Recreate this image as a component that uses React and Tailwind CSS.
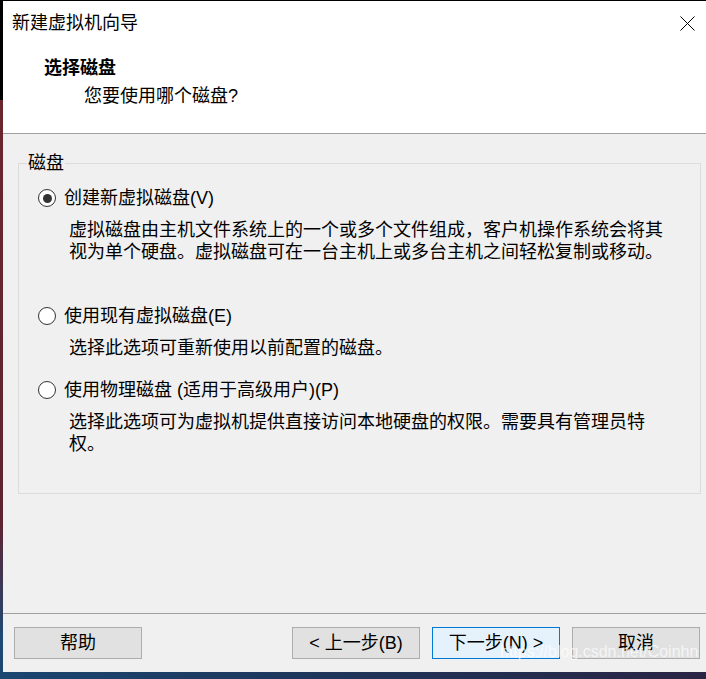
import React from "react";

const FONT = "font-['Liberation_Sans','Noto_Sans_CJK_SC',sans-serif]";

function Radio({ checked }) {
  return (
    <span className="flex h-[18px] w-[18px] flex-none items-center justify-center rounded-full border border-[#333333] bg-white">
      {checked && <span className="h-[9px] w-[9px] rounded-full bg-[#333333]" />}
    </span>
  );
}

function Option({ checked, label, lines, gapTop }) {
  return (
    <div className={gapTop}>
      <div className="flex h-[22px] items-center gap-[8px]">
        <Radio checked={checked} />
        <span className="leading-[22px]">{label}</span>
      </div>
      <div className="mt-[10px] pl-[31px] leading-[22px]">
        {lines.map((l) => (
          <div key={l} className="whitespace-nowrap">
            {l}
          </div>
        ))}
      </div>
    </div>
  );
}

function Button({ children, primary }) {
  return (
    <button
      className={
        primary
          ? "h-[32px] w-[128px] border border-[#0078d7] bg-[#e5f1fb] leading-[22px]"
          : "h-[32px] w-[128px] border border-[#adadad] bg-[#e1e1e1] leading-[22px]"
      }
    >
      {children}
    </button>
  );
}

export default function App() {
  return (
    <div className={`relative flex h-[679px] w-[706px] flex-col overflow-hidden bg-black text-[18px] text-black ${FONT}`}>
      {/* top edge of desktop */}
      <div className="h-[1px] flex-none bg-black" />

      <div className="flex flex-none">
        {/* desktop strip visible to the left */}
        <div className="w-[3px] flex-none bg-[linear-gradient(to_bottom,#000_0px,#000_99px,#6b262d_99px,#5e2330_520px,#1d4a75_640px,#1b4670_671px)]" />

        {/* wizard window */}
        <div className="flex h-[671px] flex-1 flex-col bg-[#f0f0f0]">
          {/* title bar */}
          <div className="flex h-[44px] flex-none items-center bg-white pl-[9px] pr-[11px]">
            <span className="leading-[22px]">新建虚拟机向导</span>
            <svg className="ml-auto" width="15" height="15" viewBox="0 0 15 15">
              <path d="M0.5 0.5 L14.5 14.5 M14.5 0.5 L0.5 14.5" stroke="#000" strokeWidth="1" fill="none" />
            </svg>
          </div>

          {/* header */}
          <div className="h-[89px] flex-none border-b border-[#a0a0a0] bg-white pt-[12px]">
            <div className="pl-[41px] font-bold leading-[22px]">选择磁盘</div>
            <div className="mt-[6px] pl-[81px] leading-[22px]">您要使用哪个磁盘?</div>
          </div>

          {/* body */}
          <div className="flex-1 pt-[18px]">
            <fieldset className="ml-[15px] mr-[5px] border border-[#dcdcdc] pb-[38px] pl-[19px] pt-[13px]">
              <legend className="ml-[-11px] px-[1px] leading-[22px]">磁盘</legend>
              <Option
                checked
                label="创建新虚拟磁盘(V)"
                lines={[
                  "虚拟磁盘由主机文件系统上的一个或多个文件组成，客户机操作系统会将其",
                  "视为单个硬盘。虚拟磁盘可在一台主机上或多台主机之间轻松复制或移动。",
                ]}
              />
              <Option
                label="使用现有虚拟磁盘(E)"
                lines={["选择此选项可重新使用以前配置的磁盘。"]}
                gapTop="mt-[42px]"
              />
              <Option
                label="使用物理磁盘 (适用于高级用户)(P)"
                lines={[
                  "选择此选项可为虚拟机提供直接访问本地硬盘的权限。需要具有管理员特",
                  "权。",
                ]}
                gapTop="mt-[20px]"
              />
            </fieldset>
          </div>

          {/* footer */}
          <div className="flex h-[59px] flex-none items-start border-t border-[#a0a0a0] pl-[11px] pr-[6px] pt-[13px]">
            <Button>帮助</Button>
            <div className="ml-auto flex gap-[12px]">
              <Button>&lt; 上一步(B)</Button>
              <Button primary>下一步(N) &gt;</Button>
              <Button>取消</Button>
            </div>
          </div>
        </div>
      </div>

      {/* desktop below window */}
      <div className="flex-1 bg-[linear-gradient(to_right,#1a4670,#1f3458_50%,#2a2444)]" />

      {/* blog watermark */}
      <div className="pointer-events-none absolute left-[500px] top-[641px] font-['Liberation_Sans',sans-serif] text-[16px] leading-[22px] text-white/70">
        https://blog.csdn.net/Coinhn
      </div>
    </div>
  );
}
